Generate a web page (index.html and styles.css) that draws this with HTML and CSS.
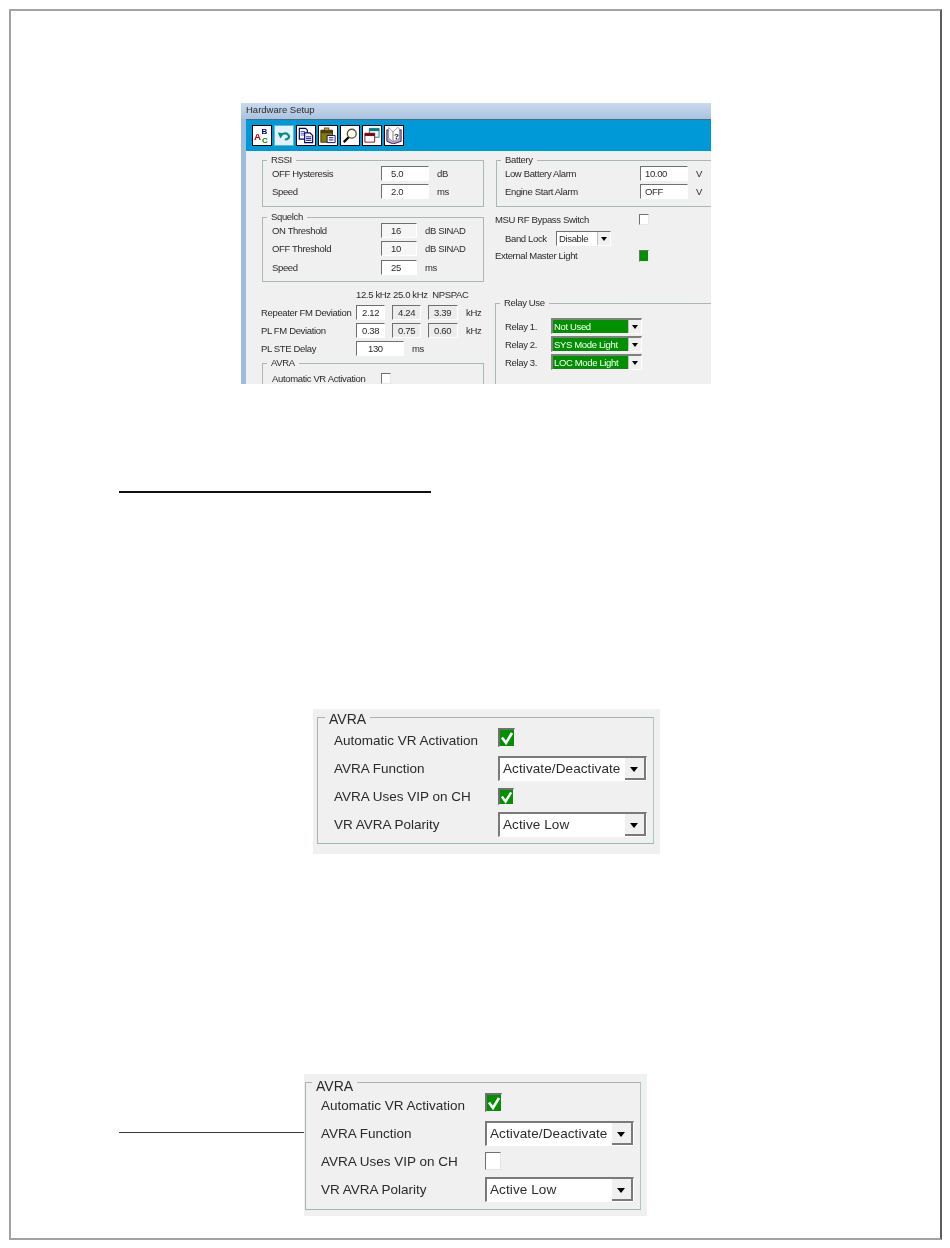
FILE: index.html
```html
<!DOCTYPE html>
<html lang="en">
<head>
<meta charset="utf-8">
<title>Hardware Setup</title>
<link rel="stylesheet" href="styles.css">
</head>
<body>
<main class="page">
  <section class="window">
    <div class="titlebar">Hardware Setup</div>
    <div class="toolbar">
      <span class="tool"><svg viewBox="0 0 18 19"><text x="0" y="15" class="ia">A</text><text x="8.500" y="8" class="ib">B</text><text x="9" y="18.500" class="ic">C</text></svg></span>
      <span class="tool tool-off"><svg viewBox="0 0 18 19"><path d="M5 10c1-3 7-4 9-1 2 3-1 5-4 5" fill="none" stroke="#008c8c" stroke-width="2.400"/><path d="M2 6l7 1-4 6z" fill="#008c8c"/></svg></span>
      <span class="tool"><svg viewBox="0 0 18 19"><path d="M1.500 1.500h7l2 2v10h-9z" fill="#fff" stroke="#000080" stroke-width="1.300"/><path d="M3 5h5M3 7h5M3 9h5" stroke="#3050c0"/><path d="M7.500 6.500h6l3 3v8h-9z" fill="#fff" stroke="#000080" stroke-width="1.300"/><path d="M9 11h6M9 13h6M9 15h6" stroke="#000080"/></svg></span>
      <span class="tool"><svg viewBox="0 0 18 19"><rect x="1" y="4" width="13" height="13" fill="#808000" stroke="#402000"/><rect x="1" y="3" width="13" height="4" fill="#504000"/><rect x="5" y="1" width="5" height="3" fill="#c0a040" stroke="#402000" stroke-width="0.700"/><path d="M8 9.500h9v8H8z" fill="#fff" stroke="#000080"/><path d="M10 12h5M10 14.500h5" stroke="#000080"/></svg></span>
      <span class="tool"><svg viewBox="0 0 18 19"><circle cx="11" cy="7.500" r="5" fill="#fffde8" stroke="#505050" stroke-width="1.500"/><path d="M7.500 11.500l-5.500 5.500" stroke="#000" stroke-width="2.600"/></svg></span>
      <span class="tool"><svg viewBox="0 0 18 19"><path d="M6 1.500h11v10H6z" fill="#eef" stroke="#008080"/><path d="M6 1.500h11v3H6z" fill="#008080"/><path d="M1 7h11v10H1z" fill="#fff" stroke="#800000"/><path d="M1 7h11v3H1z" fill="#800000"/></svg></span>
      <span class="tool"><svg viewBox="0 0 18 19"><path d="M1 3l7 3 9-3v13l-9 3-7-3z" fill="#b8a8d8" stroke="#400040"/><path d="M3 0.500l5 5v11l-5-4z" fill="#fff" stroke="#808080" stroke-width="0.800"/><path d="M8 5.500l5-5 2 1v11l-7 4z" fill="#fff" stroke="#808080" stroke-width="0.800"/><text x="9" y="13" class="iq">?</text></svg></span>
    </div>
    <div class="setup">
      <div class="col col-left">
        <div class="group group-a">
          <span class="legend">RSSI</span>
          <div class="row"><span class="lbl lbl-a">OFF Hysteresis</span><span class="field field-w48">5.0</span><span class="unit">dB</span></div>
          <div class="row"><span class="lbl lbl-a">Speed</span><span class="field field-w48">2.0</span><span class="unit">ms</span></div>
        </div>
        <div class="group group-b">
          <span class="legend">Squelch</span>
          <div class="row row-wide"><span class="lbl lbl-a">ON Threshold</span><span class="field field-w36 field-pale">16</span><span class="unit">dB SINAD</span></div>
          <div class="row row-wide"><span class="lbl lbl-a">OFF Threshold</span><span class="field field-w36 field-pale">10</span><span class="unit">dB SINAD</span></div>
          <div class="row row-wide"><span class="lbl lbl-a">Speed</span><span class="field field-w36">25</span><span class="unit">ms</span></div>
        </div>
        <div class="devhead">12.5 kHz 25.0 kHz&nbsp; NPSPAC</div>
        <div class="row"><span class="lbl lbl-d">Repeater FM Deviation</span><span class="field field-w29">2.12</span><span class="field field-w29 field-grey">4.24</span><span class="field field-w30 field-grey">3.39</span><span class="unit">kHz</span></div>
        <div class="row"><span class="lbl lbl-d">PL FM Deviation</span><span class="field field-w29">0.38</span><span class="field field-w29 field-grey">0.75</span><span class="field field-w30 field-grey">0.60</span><span class="unit">kHz</span></div>
        <div class="row"><span class="lbl lbl-d">PL STE Delay</span><span class="field field-w48 field-far">130</span><span class="unit">ms</span></div>
        <div class="group group-c">
          <span class="legend">AVRA</span>
          <div class="row"><span class="lbl lbl-a">Automatic VR Activation</span><span class="tick tick-small"></span></div>
        </div>
      </div>
      <div class="col col-right">
        <div class="group group-r">
          <span class="legend">Battery</span>
          <div class="row"><span class="lbl lbl-r">Low Battery Alarm</span><span class="field field-w48 field-near">10.00</span><span class="unit">V</span></div>
          <div class="row"><span class="lbl lbl-r">Engine Start Alarm</span><span class="field field-w48 field-near">OFF</span><span class="unit">V</span></div>
        </div>
        <div class="row row-first"><span class="lbl lbl-m">MSU RF Bypass Switch</span><span class="tick tick-small"></span></div>
        <div class="row row-in"><span class="lbl lbl-b">Band Lock</span><span class="drop drop-band"><span class="drop-text">Disable</span><span class="drop-btn"></span></span></div>
        <div class="row row-close"><span class="lbl lbl-m">External Master Light</span><span class="tick tick-small tick-fill"></span></div>
        <div class="group group-relay">
          <span class="legend">Relay Use</span>
          <div class="row"><span class="lbl lbl-y">Relay 1.</span><span class="drop drop-relay"><span class="drop-text">Not Used</span><span class="drop-btn"></span></span></div>
          <div class="row"><span class="lbl lbl-y">Relay 2.</span><span class="drop drop-relay"><span class="drop-text">SYS Mode Light</span><span class="drop-btn"></span></span></div>
          <div class="row"><span class="lbl lbl-y">Relay 3.</span><span class="drop drop-relay"><span class="drop-text">LOC Mode Light</span><span class="drop-btn"></span></span></div>
        </div>
      </div>
    </div>
  </section>

  <div class="rule-heading"></div>

  <section class="panel panel-on">
    <div class="avra">
      <span class="avra-legend">AVRA</span>
      <span class="avra-lbl">Automatic VR Activation</span>
      <span class="check check-big"><svg viewBox="0 0 14 14"><path d="M2 6.500l4 5.500 6-10" fill="none" stroke="#fff" stroke-width="2.600"/></svg></span>
      <span class="avra-lbl">AVRA Function</span>
      <span class="combo"><span class="combo-text">Activate/Deactivate</span><span class="combo-btn"></span></span>
      <span class="avra-lbl">AVRA Uses VIP on CH</span>
      <span class="check"><svg viewBox="0 0 14 14"><path d="M2 6.500l4 5.500 6-10" fill="none" stroke="#fff" stroke-width="2.600"/></svg></span>
      <span class="avra-lbl">VR AVRA Polarity</span>
      <span class="combo"><span class="combo-text">Active Low</span><span class="combo-btn"></span></span>
    </div>
  </section>

  <div class="callout">
    <div class="callout-line"></div>
    <section class="panel panel-off">
      <div class="avra">
        <span class="avra-legend">AVRA</span>
        <span class="avra-lbl">Automatic VR Activation</span>
        <span class="check check-big"><svg viewBox="0 0 14 14"><path d="M2 6.500l4 5.500 6-10" fill="none" stroke="#fff" stroke-width="2.600"/></svg></span>
        <span class="avra-lbl">AVRA Function</span>
        <span class="combo"><span class="combo-text">Activate/Deactivate</span><span class="combo-btn"></span></span>
        <span class="avra-lbl">AVRA Uses VIP on CH</span>
        <span class="check check-empty"></span>
        <span class="avra-lbl">VR AVRA Polarity</span>
        <span class="combo"><span class="combo-text">Active Low</span><span class="combo-btn"></span></span>
      </div>
    </section>
  </div>
</main>
</body>
</html>
```
FILE: styles.css
```css
* { box-sizing: border-box; }
html, body { margin: 0; background: #fff; }
body { padding: 9px 0 0 9px; font-family: "Liberation Sans", Arial, sans-serif; color: #2a2a2a; }

.page {
  width: 933px;
  height: 1231px;
  padding-top: 92px;
  border-style: solid;
  border-color: #a2a2a2 #5c5c5c #a2a2a2 #a2a2a2;
  border-width: 2px;
}

/* Hardware Setup window */
.window {
  width: 470px;
  height: 281px;
  margin-left: 230px;
  overflow: hidden;
  background: #9fbbdd;
  font-size: 9.500px;
  letter-spacing: -0.35px;
  filter: blur(0.3px);
}
.titlebar {
  height: 16px;
  padding-left: 5px;
  font-size: 9.500px;
  line-height: 13px;
  letter-spacing: 0;
  background: linear-gradient(#c9d9ee, #abc3df);
}
.toolbar {
  display: flex;
  gap: 2px;
  height: 32px;
  margin-left: 5px;
  padding: 5px 0 0 6px;
  background: #0099d8;
  border-top: 1px solid #4a6a80;
}
.tool {
  width: 20px;
  height: 21px;
  padding: 1px;
  background: #fff;
  border: 1px solid #000;
}
.tool svg { display: block; width: 100%; height: 100%; }
.tool-off { background: #e4f2f6; border-color: #5fb6d6; }
.ia { font: bold 11px "Liberation Sans", sans-serif; fill: #c00000; }
.ib { font: bold 9px "Liberation Sans", sans-serif; fill: #000080; }
.ic { font: bold 9px "Liberation Sans", sans-serif; fill: #008000; }
.iq { font: bold 9px "Liberation Sans", sans-serif; fill: #000; }

.setup {
  display: flex;
  gap: 11px;
  height: 233px;
  margin-left: 5px;
  padding: 9px 0 0 15px;
  background: #f0f0f0;
}
.col-left { flex: none; width: 223px; }
.col-right { flex: none; width: 320px; }

.group { position: relative; border: 1px solid #a9b9b1; }
.legend {
  position: absolute;
  top: -7px;
  left: 4px;
  padding: 0 4px;
  line-height: 12px;
  background: #f0f0f0;
}
.group-a { height: 47px; margin-left: 1px; padding: 3px 0 0 9px; }
.group-b { height: 65px; margin: 10px 0 0 1px; padding: 3px 0 0 9px; }
.group-c { height: 60px; margin: 6px 0 0 1px; padding: 5px 0 0 9px; }
.group-r { height: 47px; margin-left: 1px; padding: 3px 0 0 8px; }
.group-relay { height: 90px; margin-top: 39px; padding: 13px 0 0 9px; border-right: 0; border-bottom: 0; }

.row { display: flex; align-items: center; height: 18px; white-space: nowrap; }
.row-wide { height: 18.500px; }
.row-first { margin-top: 3px; }
.row-in { margin-top: 1px; padding-left: 10px; }
.row-close { height: 17px; }

.lbl { flex: none; }
.lbl-a { width: 109px; }
.lbl-d { width: 95px; }
.lbl-r { width: 135px; }
.lbl-m { width: 144px; }
.lbl-b { width: 51px; }
.lbl-y { width: 46px; }

.unit { margin-left: 8px; }

.field {
  display: block;
  flex: none;
  height: 15px;
  padding-left: 9px;
  line-height: 13px;
  background: #fff;
  border-style: solid;
  border-width: 1px;
  border-color: #6f6f6f #fff #fff #6f6f6f;
}
.field-w48 { width: 48px; }
.field-w36 { width: 36px; }
.field-w29 { width: 29px; margin-right: 7px; padding-left: 5px; }
.field-w30 { width: 30px; padding-left: 5px; }
.field-far { padding-left: 11px; }
.field-near { padding-left: 4px; }
.field-pale { background: #f6f6f6; }
.field-grey { background: #ececec; }
.devhead { height: 16px; margin-top: 5px; padding-left: 95px; line-height: 15px; }

.tick {
  display: block;
  flex: none;
  width: 10px;
  height: 11px;
  background: #fff;
  border-style: solid;
  border-width: 1px;
  border-color: #707070 #e8e8e8 #e8e8e8 #707070;
}
.tick-fill { height: 12px; background: #009000; }

.drop {
  display: flex;
  flex: none;
  background: #fff;
  border-style: solid;
  border-width: 1px;
  border-color: #707070 #fff #fff #707070;
}
.drop-text { flex: 1; padding-left: 2px; line-height: 13px; }
.drop-btn {
  position: relative;
  flex: none;
  width: 13px;
  background: #f0f0f0;
  border-left: 1px solid #c0c0c0;
}
.drop-btn::after {
  content: "";
  position: absolute;
  top: 5px;
  left: 3px;
  border: 3px solid transparent;
  border-top: 4px solid #000;
  border-bottom: 0;
}
.drop-band { width: 55px; height: 15px; }
.drop-relay {
  width: 91px;
  height: 16px;
  color: #fff;
  background: #009000;
  border-width: 2px 1px 1px 2px;
  border-color: #808080 #fff #fff #808080;
}
.drop-relay .drop-text { padding-left: 1px; }

/* Section rules */
.rule-heading {
  width: 312px;
  height: 2px;
  margin: 107px 0 0 108px;
  background: #111;
}

/* AVRA panels */
.panel { background: #f0f0f0; font-size: 13.500px; filter: blur(0.3px); }
.panel-on { width: 347px; height: 145px; margin: 216px 0 0 302px; padding: 8px 6px 10px 4px; }
.panel-off { flex: none; width: 343px; height: 142px; padding: 8px 6px 6px 1px; }

.avra {
  position: relative;
  display: grid;
  align-items: center;
  height: 100%;
  border: 1px solid #a8b5ac;
  border-right-color: #a8c8c4;
  border-bottom-color: #9ab8b4;
  grid-template-rows: repeat(4, 28px);
}
.panel-on .avra { grid-template-columns: 164px 149px; padding: 8px 0 0 16px; }
.panel-off .avra { grid-template-columns: 164px 149px; padding: 8px 0 0 15px; }
.avra-legend {
  position: absolute;
  top: -7px;
  left: 7px;
  padding: 0 4px;
  font-size: 14px;
  line-height: 16px;
  background: #f0f0f0;
}
.panel-off .avra-legend { top: -5px; left: 6px; }
.avra-lbl { white-space: nowrap; }

.check {
  display: block;
  width: 16px;
  height: 17px;
  background: #009000;
  border-style: solid;
  border-width: 2px 1px 1px 2px;
  border-color: #707070 #f8f8f8 #f8f8f8 #707070;
}
.check svg { display: block; width: 100%; height: 100%; }
.check-big { width: 17px; height: 19px; margin-top: -5px; }
.check-empty { height: 18px; background: #fff; border-width: 1px; border-color: #707070 #e4e4e4 #e4e4e4 #707070; }

.combo {
  display: flex;
  height: 25px;
  background: #fff;
  border-style: solid;
  border-width: 2px 1px 1px 2px;
  border-color: #7a7a7a #fff #fff #7a7a7a;
}
.combo-text { flex: 1; padding-left: 3px; line-height: 21px; letter-spacing: 0.1px; white-space: nowrap; }
.combo-btn {
  position: relative;
  flex: none;
  width: 21px;
  background: #f0f0f0;
  border-right: 2px solid #7a7a7a;
  border-bottom: 2px solid #7a7a7a;
}
.combo-btn::after {
  content: "";
  position: absolute;
  top: 9px;
  left: 5px;
  border: 4px solid transparent;
  border-top: 5px solid #000;
  border-bottom: 0;
}

.callout { display: flex; margin: 220px 0 0 108px; }
.callout-line { flex: none; width: 185px; height: 1px; margin-top: 58px; background: #3a3a3a; }
```
